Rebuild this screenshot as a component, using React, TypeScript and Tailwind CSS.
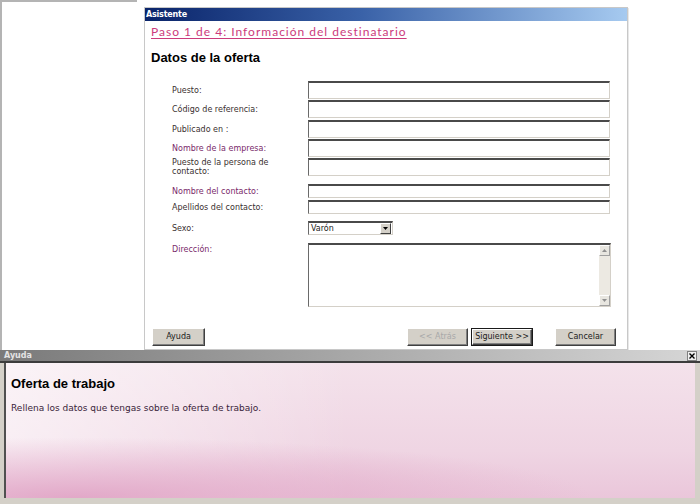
import React from 'react';

const rows = [
  { label: 'Puesto:', purple: false, mt: 'mt-0', h: 'h-[18px]' },
  { label: 'Código de referencia:', purple: false, mt: 'mt-[1px]', h: 'h-[18px]' },
  { label: 'Publicado en :', purple: false, mt: 'mt-[2px]', h: 'h-[18px]' },
  { label: 'Nombre de la empresa:', purple: true, mt: 'mt-[1px]', h: 'h-[18px]' },
  { label: 'Puesto de la persona de contacto:', purple: false, mt: 'mt-[1px]', h: 'h-[18px]' },
  { label: 'Nombre del contacto:', purple: true, mt: 'mt-[8px]', h: 'h-[14px]' },
  { label: 'Apellidos del contacto:', purple: false, mt: 'mt-[2px]', h: 'h-[14px]' },
];

const inset =
  'border border-[#d4d0c8] border-t-2 border-t-[#4a4a4a] border-l-[#6a6a6a] bg-white';

function WinButton({ children, className = '' }: { children: React.ReactNode; className?: string }) {
  return (
    <div
      className={`h-[18px] flex items-center justify-center bg-[#d4d0c8] border border-t-white border-l-white border-b-[#404040] border-r-[#404040] shadow-[inset_-1px_-1px_0_#808080] text-[8px] text-[#202020] ${className}`}
    >
      {children}
    </div>
  );
}

export default function App() {
  return (
    <div className="w-[700px] h-[504px] bg-white overflow-hidden flex flex-col font-['DejaVu_Sans',sans-serif]">
      {/* top area */}
      <div className="h-[350px] flex shrink-0">
        <div className="w-[137px] h-full border-t-2 border-l-2 border-[#b4b4b4]" />
        <div className="ml-[7px] mt-[7px] w-[484px] h-[343px] border border-[#c8c8c8] bg-white flex flex-col shadow-[1px_1px_0_#e8e8e8]">
          <div className="h-[13px] bg-[linear-gradient(to_right,#0a246a,#3a62a8_45%,#a6caf0)] flex items-center pl-[1px]">
            <span className="text-white font-bold text-[8px] tracking-[-0.2px] leading-none">Asistente</span>
          </div>
          <div className="pl-[6px] pt-[3px] leading-[14px]">
            <span className="font-['Lato',sans-serif] text-[12px] tracking-[1px] text-[#cc3a7c] underline underline-offset-2">
              Paso 1 de 4: Información del destinatario
            </span>
          </div>
          <div className="pl-[6px] mt-[11px] leading-[16px] font-['Liberation_Sans',sans-serif] font-bold text-[13px] text-black">
            Datos de la oferta
          </div>

          <div className="mt-[15px] pl-[27px] flex flex-col">
            {rows.map((r) => (
              <div key={r.label} className={`flex items-center ${r.mt}`}>
                <div
                  className={`w-[136px] text-[8px] leading-[9px] pr-[20px] ${r.purple ? 'text-[#7a2a6a]' : 'text-[#3a3030]'}`}
                >
                  {r.label}
                </div>
                <div className={`w-[302px] ${r.h} ${inset}`} />
              </div>
            ))}

            <div className="flex items-center mt-[7px]">
              <div className="w-[136px] text-[8px] leading-[9px] text-[#3a3030]">Sexo:</div>
              <div className={`w-[85px] h-[14px] ${inset} border-t flex items-center justify-between`}>
                <span className="pl-[2px] text-[8px] leading-none text-[#202020]">Varón</span>
                <div className="w-[11px] h-[11px] mr-[1px] bg-[#d4d0c8] border border-t-white border-l-white border-b-[#404040] border-r-[#404040] flex items-center justify-center">
                  <svg width="5" height="3" viewBox="0 0 5 3">
                    <path d="M0 0h5L2.5 3z" fill="#000" />
                  </svg>
                </div>
              </div>
            </div>

            <div className="flex items-start mt-[8px]">
              <div className="w-[136px] pt-[2px] text-[8px] leading-[9px] text-[#7a2a6a]">Dirección:</div>
              <div className={`w-[303px] h-[64px] ${inset} flex justify-end`}>
                <div className="w-[11px] h-full bg-[#ece9e2] flex flex-col justify-between">
                  <div className="h-[11px] bg-[#e8e6e0] border border-t-white border-l-white border-b-[#a0a0a0] border-r-[#a0a0a0] flex items-center justify-center">
                    <svg width="5" height="3" viewBox="0 0 5 3">
                      <path d="M0 3h5L2.5 0z" fill="#909090" />
                    </svg>
                  </div>
                  <div className="h-[11px] bg-[#e8e6e0] border border-t-white border-l-white border-b-[#a0a0a0] border-r-[#a0a0a0] flex items-center justify-center">
                    <svg width="5" height="3" viewBox="0 0 5 3">
                      <path d="M0 0h5L2.5 3z" fill="#909090" />
                    </svg>
                  </div>
                </div>
              </div>
            </div>
          </div>

          <div className="mt-[21px] flex items-center pl-[7px] pr-[11px]">
            <WinButton className="w-[53px]">Ayuda</WinButton>
            <div className="flex-1" />
            <WinButton className="w-[61px] text-[#a8a8a8]">&lt;&lt; Atrás</WinButton>
            <div className="ml-[3px] w-[62px] h-[18px] border border-[#1a1a1a] flex">
              <WinButton className="w-full h-full">Siguiente &gt;&gt;</WinButton>
            </div>
            <WinButton className="ml-[22px] w-[61px]">Cancelar</WinButton>
          </div>
        </div>
      </div>

      {/* help panel */}
      <div className="flex-1 flex flex-col bg-[#d4d0c8]">
        <div className="h-[11px] bg-[linear-gradient(to_right,#7a7a7a,#a8a8a8_50%,#d6d6d6)] flex items-center justify-between pl-[4px] pr-[3px]">
          <span className="text-[8px] font-bold leading-none text-[#e4e4e4]">Ayuda</span>
          <div className="w-[10px] h-[10px] bg-[#f0f0f0] border border-[#808080] flex items-center justify-center">
            <svg width="6" height="6" viewBox="0 0 6 6">
              <path d="M0.5 0.5L5.5 5.5M5.5 0.5L0.5 5.5" stroke="#000" strokeWidth="1.4" />
            </svg>
          </div>
        </div>
        <div className="h-[2px] bg-[#3c3c3c]" />
        <div className="flex-1 flex pl-[4px] pr-[5px] pb-[6px]">
          <div className="flex-1 border-l-2 border-[#505050] bg-[radial-gradient(ellipse_75%_45%_at_10%_100%,#e2a8c8,rgba(226,168,200,0)),linear-gradient(to_right,rgba(255,255,255,0.6),rgba(255,255,255,0)_50%),linear-gradient(to_bottom,#f4e2eb,#efd5e3_65%,#eac6da)] px-[5px] pt-[13px]">
            <div className="font-['Liberation_Sans',sans-serif] font-bold text-[13px] leading-[16px] text-black">
              Oferta de trabajo
            </div>
            <div className="mt-[10px] text-[9px] leading-[12px] text-[#3a1e3a]">
              Rellena los datos que tengas sobre la oferta de trabajo.
            </div>
          </div>
        </div>
      </div>
    </div>
  );
}
